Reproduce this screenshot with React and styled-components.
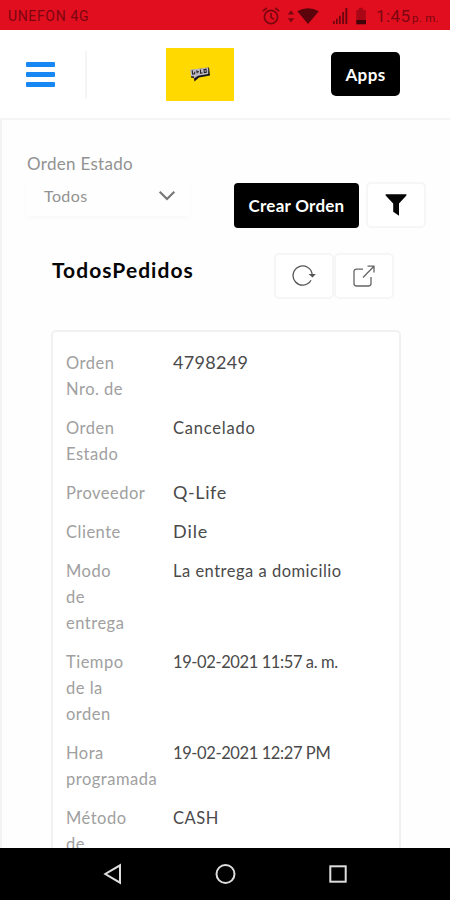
import React from "react";
import styled, { createGlobalStyle } from "styled-components";

const orders = [
    { label: ["Orden", "Nro. de"], value: "4798249", spacing: 0.3, size: 18 },
    { label: ["Orden", "Estado"], value: "Cancelado", spacing: 0.8 },
    { label: ["Proveedor"], value: "Q-Life", spacing: 0.6, size: 18 },
    { label: ["Cliente"], value: "Dile", spacing: 0.9, size: 18 },
    { label: ["Modo", "de", "entrega"], value: "La entrega a domicilio", spacing: 0.5 },
    { label: ["Tiempo", "de la", "orden"], value: "19-02-2021 11:57 a. m.", spacing: -0.4 },
    { label: ["Hora", "programada"], value: "19-02-2021 12:27 PM", spacing: -0.4 },
    { label: ["Método", "de"], value: "CASH", spacing: 0.5 },
];

const App = () => {
    return (
        <Screen>
            <GlobalStyle />
            <StatusBar>
                <Carrier>UNEFON 4G</Carrier>
                <StatusIcons />
                <Clock>1:45</Clock>
                <Meridiem>p. m.</Meridiem>
            </StatusBar>

            <Header>
                <MenuButton>
                    <MenuLine />
                    <MenuLine />
                    <MenuLine />
                </MenuButton>
                <Divider />
                <Logo>
                    <svg width="22" height="17" viewBox="0 0 22 17">
                        <path d="M2 4 L20 1.5 L21 9.5 L10 11.5 L5.5 15.5 L4.8 12 L2 11.5Z" fill="#17151c" />
                        <path d="M1 3.8 L19.2 1.5 L19.2 8 L9 9.8 L5 12.5 L4.8 10.2 L2 10.3Z" fill="#bdbac5" />
                        <path d="M3.2 4.3l.4 3.8 2-.3.2-2M7.8 4.2l.4 3.2M8 5.8h2M11.5 3.5v3.7l2-.3M15 3.5l2-.3.3 3-2 .4z" fill="none" stroke="#24212a" strokeWidth="1.1" />
                    </svg>
                </Logo>
                <AppsButton>Apps</AppsButton>
            </Header>

            <Content>
                <FilterRow>
                    <FilterGroup>
                        <FilterLabel>Orden Estado</FilterLabel>
                        <Select>
                            <span>Todos</span>
                            <svg width="18" height="12" viewBox="0 0 18 12">
                                <path d="M1.7 1.8 L9 9 L16.3 1.8" fill="none" stroke="#777" strokeWidth="2.2" />
                            </svg>
                        </Select>
                    </FilterGroup>
                    <CreateButton>Crear Orden</CreateButton>
                    <IconButton>
                        <svg width="22" height="22" viewBox="0 0 22 22">
                            <path d="M.6 .3 H21.4 V1.6 L14 9.5 V21.7 L8.2 17.8 V9.5 L.6 1.6Z" fill="#050505" />
                        </svg>
                    </IconButton>
                </FilterRow>

                <TitleRow>
                    <Title>TodosPedidos</Title>
                    <IconButton>
                        <svg width="24" height="22" viewBox="0 0 24 22">
                            <path d="M19 15.3 A9.6 9.6 0 1 1 20.2 9.6" fill="none" stroke="#555" strokeWidth="1.3" />
                            <path d="M16.5 8.9 H23.8 L20.5 12.5Z" fill="#555" />
                        </svg>
                    </IconButton>
                    <IconButton>
                        <svg width="22" height="22" viewBox="0 0 22 22" fill="none" stroke="#666" strokeWidth="1.3">
                            <path d="M10 4.1 H3.5 Q1 4.1 1 6.6 V18.5 Q1 21 3.5 21 H15.5 Q18 21 18 18.5 V12" />
                            <path d="M10 12.5 L21 1.3 M14.5 1.2 H21 V7.5" />
                        </svg>
                    </IconButton>
                </TitleRow>

                <Card>
                    {orders.map((row, i) => (
                        <Row key={i}>
                            <Label>
                                {row.label.map((line) => (
                                    <div key={line}>{line}</div>
                                ))}
                            </Label>
                            <Value $spacing={row.spacing} $size={row.size}>{row.value}</Value>
                        </Row>
                    ))}
                </Card>
            </Content>

            <NavBar>
                <svg width="20" height="22" viewBox="0 0 20 22">
                    <path d="M17 2.3 V19.7 L2.3 11Z" fill="none" stroke="#ddd" strokeWidth="2" />
                </svg>
                <svg width="22" height="22" viewBox="0 0 22 22">
                    <circle cx="10.5" cy="11" r="9" fill="none" stroke="#ddd" strokeWidth="2" />
                </svg>
                <svg width="18" height="18" viewBox="0 0 18 18">
                    <rect x="1.3" y="1.3" width="15.4" height="15.4" fill="none" stroke="#ddd" strokeWidth="2" />
                </svg>
            </NavBar>
        </Screen>
    );
};

const StatusIcons = () => (
    <svg width="108" height="20" viewBox="0 0 108 20">
        {/* alarm */}
        <g fill="none" stroke="#7c0610" strokeWidth="1.7">
            <circle cx="10" cy="11" r="6.6" />
            <path d="M10 7v4.4l3 2M1.8 5.2l4-3.2M18.2 5.2l-4-3.2" />
        </g>
        {/* data arrows + wifi */}
        <path d="M26.8 8.5l3.2-4.3 3.2 4.3zM26.8 12.2h6.4L30 16.5z" fill="#7c0610" />
        <path d="M36.3 5.3Q47 -.6 57.8 5.3L47 18Z" fill="#5b040c" />
        {/* signal */}
        <path d="M72 15h1.7v3H72zM75 12.8h1.7V18H75zM78 9.8h1.7V18H78zM81.2 6h1.8v12h-1.8zM84.4 2h1.9v16h-1.9z" fill="#6d050e" />
        {/* battery */}
        <path d="M95.3 4h2.5V1.7h4V4h3v10h-9.5z" fill="#a80816" />
        <path d="M95.3 14h9.7v4.3h-9.7z" fill="#40030a" />
    </svg>
);

export default App;

const GlobalStyle = createGlobalStyle`
    * {
        box-sizing: border-box;
    }
    body {
        margin: 0;
        background: #fefefe;
        font-family: Lato, "Liberation Sans", sans-serif;
    }
    button {
        font-family: inherit;
        padding: 0;
    }
    svg {
        display: block;
        flex: none;
    }
`;

const Screen = styled.div`
    display: flex;
    flex-direction: column;
    width: 450px;
    height: 900px;
    overflow: hidden;
`;

const StatusBar = styled.div`
    display: flex;
    align-items: center;
    flex: none;
    height: 30px;
    padding: 2px 0 0 8px;
    background: #e10e1f;
    font-family: Roboto, sans-serif;
    color: #7c0610;
    white-space: nowrap;
`;

const Carrier = styled.span`
    width: 253px;
    font-size: 14px;
    letter-spacing: 0.65px;
`;

const Clock = styled.span`
    width: 36px;
    margin-left: 7px;
    font-size: 17px;
    letter-spacing: 0.4px;
`;

const Meridiem = styled.span`
    padding-top: 4px;
    font-size: 11.5px;
    letter-spacing: 0.3px;
`;

const Header = styled.header`
    display: flex;
    align-items: center;
    flex: none;
    height: 90px;
    padding: 0 50px 0 26px;
    background: #fff;
    border-bottom: 2px solid #f5f5f5;
`;

const MenuButton = styled.div`
    display: flex;
    flex-direction: column;
    gap: 5px;
    width: 29px;
`;

const MenuLine = styled.span`
    height: 5px;
    border-radius: 1px;
    background: #1687f3;
`;

const Divider = styled.div`
    width: 2px;
    height: 47px;
    margin-left: 30px;
    background: #f5f5f5;
`;

const Logo = styled.div`
    display: flex;
    align-items: center;
    justify-content: center;
    width: 68px;
    height: 53px;
    margin-left: 79px;
    background: #ffd900;
`;

const AppsButton = styled.button`
    width: 69px;
    height: 44px;
    margin-left: auto;
    border: 0;
    border-radius: 5px;
    background: #000;
    color: #fff;
    font-size: 17px;
    font-weight: 700;
    letter-spacing: 0.4px;
`;

const Content = styled.main`
    flex: 1;
    min-height: 0;
    overflow: hidden;
    border-left: 2px solid #f3f3f3;
`;

const FilterRow = styled.div`
    display: flex;
    align-items: flex-end;
    padding: 32px 0 0 24px;
`;

const FilterGroup = styled.div`
    width: 164px;
    margin-right: 44px;
    margin-bottom: 12px;
    color: #929292;
`;

const FilterLabel = styled.div`
    padding-left: 1px;
    font-size: 17px;
    line-height: 24px;
    letter-spacing: 0.3px;
`;

const Select = styled.div`
    display: flex;
    align-items: center;
    justify-content: space-between;
    height: 40px;
    padding: 0 14px 1px 18px;
    border-radius: 4px;
    font-size: 16px;
    letter-spacing: 0.4px;
    box-shadow: 0 3px 4px rgba(0, 0, 0, 0.025);
`;

const CreateButton = styled.button`
    width: 125px;
    height: 45px;
    margin-right: 7px;
    border: 0;
    border-radius: 4px;
    background: #000;
    color: #fff;
    font-size: 17px;
    font-weight: 700;
    letter-spacing: 0.25px;
`;

const IconButton = styled.button`
    display: flex;
    align-items: center;
    justify-content: center;
    width: 60px;
    height: 46px;
    border: 2px solid #f6f6f6;
    border-radius: 5px;
    background: #fff;
`;

const TitleRow = styled.div`
    display: flex;
    padding: 25px 56px 0 50px;
`;

const Title = styled.h1`
    flex: 1;
    margin: 4px 0 0;
    font-size: 21px;
    line-height: 25px;
    font-weight: 700;
    letter-spacing: 1.05px;
    color: #050505;
`;

const Card = styled.section`
    width: 350px;
    height: 700px;
    margin: 31px 0 0 49px;
    padding: 18px 13px;
    border: 2px solid #f1f1f1;
    border-radius: 5px;
    background: #fff;
`;

const Row = styled.div`
    display: flex;
    margin-bottom: 13px;
`;

const Label = styled.div`
    width: 107px;
    font-size: 16.5px;
    line-height: 26px;
    letter-spacing: 0.5px;
    color: #a0a0a0;
`;

const Value = styled.div`
    font-size: ${(props) => props.$size || 16.5}px;
    line-height: ${(props) => (props.$size ? 24 : 27)}px;
    height: 26px;
    letter-spacing: ${(props) => props.$spacing}px;
    color: #4a4a4a;
    white-space: nowrap;
`;

const NavBar = styled.nav`
    display: flex;
    align-items: center;
    flex: none;
    justify-content: space-between;
    height: 52px;
    padding: 0 103px 0 103px;
    background: #000;
`;
